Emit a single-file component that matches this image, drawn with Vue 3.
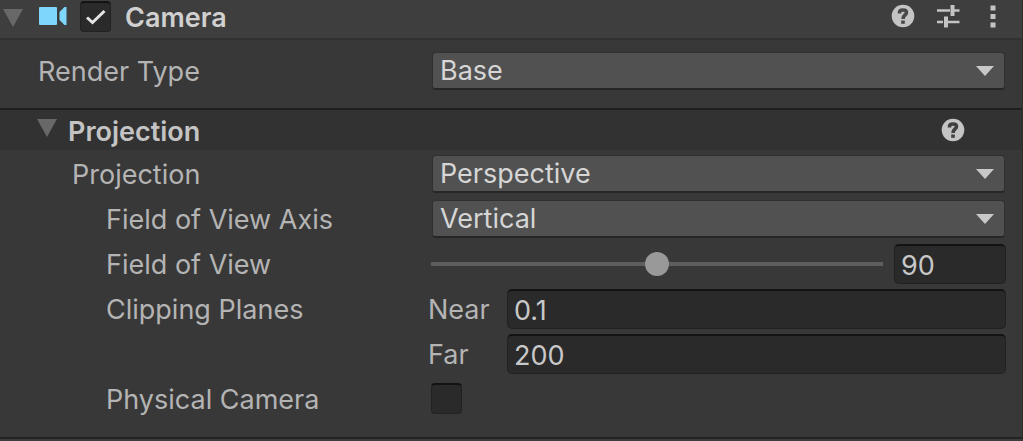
<script setup>

import { ref } from 'vue';

const enabled = ref(true);
const componentOpen = ref(true);
const projectionOpen = ref(true);

const renderType = ref('Base');
const renderTypes = ['Base', 'Overlay'];

const projection = ref('Perspective');
const projections = ['Perspective', 'Orthographic'];

const fovAxis = ref('Vertical');
const fovAxes = ['Vertical', 'Horizontal'];

const fieldOfView = ref(90);
const near = ref('0.1');
const far = ref('200');
const physicalCamera = ref(false);

</script>

<template>
  <main class="inspector">
    <header class="bar">
      <button class="fold" aria-label="Toggle Camera" @click="componentOpen = !componentOpen">
        <svg class="arrow" :class="{ 'arrow--closed': !componentOpen }" width="20" height="18" viewBox="0 0 20 18">
          <path d="M0 0H20L10 18Z" fill="#686868" />
        </svg>
      </button>
      <svg class="camera" width="28" height="18" viewBox="0 0 28 18">
        <rect width="18" height="18" rx="1" fill="#7fd6fd" />
        <path d="M20.500 5L25.500 0H27.500V18H25.500L20.500 13Z" fill="#7fd6fd" />
      </svg>
      <label class="title">
        <span class="tick">
          <input v-model="enabled" class="check" type="checkbox">
          <svg v-if="enabled" class="tick-mark" width="20" height="16" viewBox="0 0 20 16">
            <path d="M1 8.500L6.500 13.500L18.500 2" fill="none" stroke="#e4e4e4" stroke-width="3" />
          </svg>
        </span>
        <span class="title-text">Camera</span>
      </label>
      <div class="tools">
        <button class="tool" aria-label="Help">
          <svg width="24" height="24" viewBox="0 0 24 24">
            <circle cx="12" cy="12" r="11.300" fill="#c4c4c4" />
            <path d="M8.500 9.500V8.500C8.500 6.500 10 6 12 6S15.500 6.500 15.500 8.500C15.500 11 12 11 12 15" fill="none" stroke="#484848" stroke-width="3.600" />
            <rect x="10.200" y="16.500" width="3.600" height="3.300" fill="#484848" />
          </svg>
        </button>
        <button class="tool" aria-label="Presets">
          <svg width="24" height="24" viewBox="0 0 24 24">
            <path d="M1 6.500H14M18 6.500H23.500M1 18H7M11 18H23.500" stroke="#c4c4c4" stroke-width="2.400" />
            <path d="M16.500 1V12M10 12.500V23.500" stroke="#c4c4c4" stroke-width="4" />
          </svg>
        </button>
        <button class="tool" aria-label="More">
          <svg width="24" height="24" viewBox="0 0 24 24">
            <path d="M9.500 1.500h5v5h-5zM9.500 10h5v5h-5zM9.500 18.500h5v5h-5z" fill="#c4c4c4" />
          </svg>
        </button>
      </div>
    </header>

    <template v-if="componentOpen">
      <div class="rows rows--top">
        <div class="row">
          <label class="label" for="render-type">Render Type</label>
          <div class="dropdown">
            <select id="render-type" v-model="renderType">
              <option v-for="item in renderTypes" :key="item">{{ item }}</option>
            </select>
            <svg class="caret" width="18" height="10" viewBox="0 0 18 10"><path d="M0 0H18L9 10Z" fill="#c8c8c8" /></svg>
          </div>
        </div>
      </div>

      <section>
        <h2 class="bar bar--section">
          <button class="fold" aria-label="Toggle Projection" @click="projectionOpen = !projectionOpen">
            <svg class="arrow" :class="{ 'arrow--closed': !projectionOpen }" width="20" height="18" viewBox="0 0 20 18">
              <path d="M0 0H20L10 18Z" fill="#686868" />
            </svg>
          </button>
          <span class="title-text">Projection</span>
          <div class="tools">
            <button class="tool" aria-label="Projection help">
              <svg width="24" height="24" viewBox="0 0 24 24">
                <circle cx="12" cy="12" r="11.300" fill="#c4c4c4" />
                <path d="M8.500 9.500V8.500C8.500 6.500 10 6 12 6S15.500 6.500 15.500 8.500C15.500 11 12 11 12 15" fill="none" stroke="#404040" stroke-width="3.600" />
                <rect x="10.200" y="16.500" width="3.600" height="3.300" fill="#404040" />
              </svg>
            </button>
          </div>
        </h2>

        <div v-if="projectionOpen" class="rows">
          <div class="row">
            <label class="label label--1" for="projection">Projection</label>
            <div class="dropdown">
              <select id="projection" v-model="projection">
                <option v-for="item in projections" :key="item">{{ item }}</option>
              </select>
              <svg class="caret" width="18" height="10" viewBox="0 0 18 10"><path d="M0 0H18L9 10Z" fill="#c8c8c8" /></svg>
            </div>
          </div>
          <div class="row">
            <label class="label label--2" for="fov-axis">Field of View Axis</label>
            <div class="dropdown">
              <select id="fov-axis" v-model="fovAxis">
                <option v-for="item in fovAxes" :key="item">{{ item }}</option>
              </select>
              <svg class="caret" width="18" height="10" viewBox="0 0 18 10"><path d="M0 0H18L9 10Z" fill="#c8c8c8" /></svg>
            </div>
          </div>
          <div class="row">
            <label class="label label--2" for="fov">Field of View</label>
            <div class="slider">
              <input v-model="fieldOfView" class="range" type="range" min="1" max="179" aria-label="Field of View slider">
              <input id="fov" v-model="fieldOfView" class="field field--small" type="text">
            </div>
          </div>
          <div class="row">
            <span class="label label--2">Clipping Planes</span>
            <div class="plane">
              <label class="plane-label" for="near">Near</label>
              <input id="near" v-model="near" class="field" type="text">
            </div>
          </div>
          <div class="row">
            <div class="plane">
              <label class="plane-label" for="far">Far</label>
              <input id="far" v-model="far" class="field" type="text">
            </div>
          </div>
          <div class="row">
            <label class="label label--2" for="physical">Physical Camera</label>
            <div class="toggle">
              <span class="tick">
                <input id="physical" v-model="physicalCamera" class="check" type="checkbox">
                <svg v-if="physicalCamera" class="tick-mark" width="20" height="16" viewBox="0 0 20 16">
                  <path d="M1 8.500L6.500 13.500L18.500 2" fill="none" stroke="#e4e4e4" stroke-width="3" />
                </svg>
              </span>
            </div>
          </div>
        </div>
      </section>
    </template>
  </main>
</template>

<style>
  body {
    margin: 0;
    background: #3c3c3c;
  }
</style>

<style scoped>
  * {
    box-sizing: border-box;
  }

  .inspector {
    background: #383838;
    border-right: 1px solid #303030;
    border-bottom: 2px solid #232323;
    color: #b4b4b4;
    font-family: Inter, "Liberation Sans", sans-serif;
    font-size: 27px;
    line-height: 36px;
  }

  button {
    display: flex;
    padding: 0;
    border: 0;
    background: none;
    cursor: pointer;
  }

  .bar {
    display: flex;
    align-items: center;
    height: 40px;
    margin: 0;
    padding: 0 17px 6px 3px;
    background: #3e3e3e;
    border-bottom: 2px solid #313131;
    color: #d0d0d0;
    font-size: 27px;
    font-weight: 600;
  }

  .bar--section {
    height: 42px;
    padding: 0 57px 0 37px;
    background: #323232;
    border-top: 2px solid #202020;
    border-bottom: 0;
    color: #c4c4c4;
  }

  .fold {
    margin-right: 16px;
    padding-top: 4px;
  }

  .bar--section .fold {
    margin-right: 11px;
    padding: 0 0 4px;
  }

  .arrow--closed {
    transform: rotate(-90deg);
  }

  .camera {
    margin-right: 13px;
  }

  .title {
    display: flex;
    align-items: center;
    gap: 14px;
  }

  .title-text {
    padding-top: 3px;
  }

  .tools {
    display: flex;
    gap: 21px;
    margin-left: auto;
  }

  .tick {
    position: relative;
    display: flex;
    width: 31px;
    height: 31px;
  }

  .check {
    appearance: none;
    width: 31px;
    height: 31px;
    margin: 0;
    border: 1px solid #222222;
    border-top: 2px solid #131313;
    border-radius: 4px;
    background: #2a2a2a;
  }

  .tick-mark {
    position: absolute;
    top: 8px;
    left: 6px;
    pointer-events: none;
  }

  .rows {
    padding: 1px 16px 16px 0;
  }

  .rows--top {
    padding: 8px 16px 15px 0;
  }

  .row {
    display: grid;
    grid-template-columns: minmax(0, 430px) minmax(0, 1fr);
    align-items: center;
    height: 45px;
  }

  .label {
    grid-column: 1;
    padding-top: 3px;
    padding-left: 38px;
    white-space: nowrap;
  }

  .label--1 {
    padding-left: 72px;
  }

  .label--2 {
    padding-left: 106px;
  }

  .dropdown,
  .slider,
  .plane,
  .toggle {
    grid-column: 2;
  }

  .dropdown {
    position: relative;
    display: flex;
    padding: 0 1px 0 2px;
  }

  select {
    appearance: none;
    width: 100%;
    height: 38px;
    padding: 0 40px 2px 7px;
    border: 1px solid #303030;
    border-bottom: 2px solid #262626;
    border-radius: 4px;
    background: #515151;
    color: #d6d6d6;
    font: inherit;
  }

  .caret {
    position: absolute;
    top: 14px;
    right: 12px;
    pointer-events: none;
  }

  .slider {
    display: flex;
    align-items: center;
    gap: 11px;
    padding-left: 1px;
  }

  .range {
    appearance: none;
    flex: 1;
    min-width: 0;
    height: 24px;
    margin: 0;
    background: none;
  }

  .range::-webkit-slider-runnable-track {
    height: 4px;
    background: #5e5e5e;
  }

  .range::-webkit-slider-thumb {
    appearance: none;
    width: 24px;
    height: 24px;
    margin-top: -10px;
    border-radius: 50%;
    background: #999999;
  }

  .field {
    width: 100%;
    min-width: 0;
    height: 40px;
    padding: 3px 6px 0;
    border: 1px solid #212121;
    border-top: 2px solid #131313;
    border-radius: 5px;
    background: #2a2a2a;
    color: #c8c8c8;
    font: inherit;
  }

  .field--small {
    flex: none;
    width: 112px;
  }

  .plane {
    display: grid;
    grid-template-columns: 79px minmax(0, 1fr);
    align-items: center;
    margin-left: -2px;
  }

  .plane-label {
    padding-top: 3px;
  }

  .toggle {
    padding-left: 1px;
  }
</style>
